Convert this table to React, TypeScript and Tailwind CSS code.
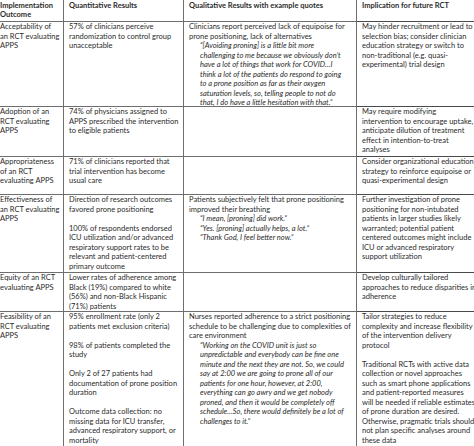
import React from 'react';

type Line = string | { q: string };

interface Row {
  height: string;
  cells: Line[][];
}

const rows: Row[] = [
  {
    height: 'h-[85px]',
    cells: [
      ['Acceptability of', 'an RCT evaluating', 'APPS'],
      ['57% of clinicians perceive', 'randomization to control group', 'unacceptable'],
      [
        'Clinicians report perceived lack of equipoise for',
        'prone positioning, lack of alternatives',
        { q: '“[Avoiding proning] is a little bit more' },
        { q: 'challenging to me because we obviously don’t' },
        { q: 'have a lot of things that work for COVID…I' },
        { q: 'think a lot of the patients do respond to going' },
        { q: 'to a prone position as far as their oxygen' },
        { q: 'saturation levels, so, telling people to not do' },
        { q: 'that, I do have a little hesitation with that.”' },
      ],
      [
        'May hinder recruitment or lead to',
        'selection bias; consider clinician',
        'education strategy or switch to',
        'non-traditional (e.g. quasi-',
        'experimental) trial design',
      ],
    ],
  },
  {
    height: 'h-[50px]',
    cells: [
      ['Adoption of an', 'RCT evaluating', 'APPS'],
      ['74% of physicians assigned to', 'APPS prescribed the intervention', 'to eligible patients'],
      [],
      [
        'May require modifying',
        'intervention to encourage uptake,',
        'anticipate dilution of treatment',
        'effect in intention-to-treat',
        'analyses',
      ],
    ],
  },
  {
    height: 'h-[38px]',
    cells: [
      ['Appropriateness', 'of an RCT', 'evaluating APPS'],
      ['71% of clinicians reported that', 'trial intervention has become', 'usual care'],
      [],
      [
        'Consider organizational education',
        'strategy to reinforce equipoise or',
        'quasi-experimental design',
      ],
    ],
  },
  {
    height: 'h-[78px]',
    cells: [
      ['Effectiveness of', 'an RCT evaluating', 'APPS'],
      [
        'Direction of research outcomes',
        'favored prone positioning',
        '',
        '100% of respondents endorsed',
        'ICU utilization and/or advanced',
        'respiratory support rates to be',
        'relevant and patient-centered',
        'primary outcome',
      ],
      [
        'Patients subjectively felt that prone positioning',
        'improved their breathing',
        { q: '“I mean, [proning] did work.”' },
        { q: '“Yes. [proning] actually helps, a lot.”' },
        { q: '“Thank God, I feel better now.”' },
      ],
      [
        'Further investigation of prone',
        'positioning for non-intubated',
        'patients in larger studies likely',
        'warranted; potential patient',
        'centered outcomes might include',
        'ICU or advanced respiratory',
        'support utilization',
      ],
    ],
  },
  {
    height: 'h-[39px]',
    cells: [
      ['Equity of an RCT', 'evaluating APPS'],
      [
        'Lower rates of adherence among',
        'Black (19%) compared to white',
        '(56%) and non-Black Hispanic',
        '(71%) patients',
      ],
      [],
      ['Develop culturally tailored', 'approaches to reduce disparities in', 'adherence'],
    ],
  },
  {
    height: 'h-[140px]',
    cells: [
      ['Feasibility of an', 'RCT evaluating', 'APPS'],
      [
        '95% enrollment rate (only 2',
        'patients met exclusion criteria)',
        '',
        '98% of patients completed the',
        'study',
        '',
        'Only 2 of 27 patients had',
        'documentation of prone position',
        'duration',
        '',
        'Outcome data collection: no',
        'missing data for ICU transfer,',
        'advanced respiratory support, or',
        'mortality',
      ],
      [
        'Nurses reported adherence to a strict positioning',
        'schedule to be challenging due to complexities of',
        'care environment',
        { q: '“Working on the COVID unit is just so' },
        { q: 'unpredictable and everybody can be fine one' },
        { q: 'minute and the next they are not. So, we could' },
        { q: 'say at 2:00 we are going to prone all of our' },
        { q: 'patients for one hour, however, at 2:00,' },
        { q: 'everything can go awry and we get nobody' },
        { q: 'proned, and then it would be completely off' },
        { q: 'schedule…So, there would definitely be a lot of' },
        { q: 'challenges to it.”' },
      ],
      [
        'Tailor strategies to reduce',
        'complexity and increase flexibility',
        'of the intervention delivery',
        'protocol',
        '',
        'Traditional RCTs with active data',
        'collection or novel approaches',
        'such as smart phone applications',
        'and patient-reported measures',
        'will be needed if reliable estimates',
        'of prone duration are desired.',
        'Otherwise, pragmatic trials should',
        'not plan specific analyses around',
        'these data',
      ],
    ],
  },
];

const padding = ['pl-[5px]', 'pl-[5px]', 'pl-[5px]', 'pl-[5px]'];

const Cell: React.FC<{ lines: Line[]; col: number; last: boolean }> = ({ lines, col, last }) => (
  <div
    className={`${padding[col]} overflow-hidden ${col < 3 ? 'border-r border-[#6e6e6e]' : ''} ${
      last ? '' : 'border-b border-[#4a4a4a]'
    }`}
  >
    {lines.map((line, i) =>
      typeof line === 'string' ? (
        <div key={i} className="whitespace-nowrap">
          {line === '' ? '\u00a0' : line}
        </div>
      ) : (
        <div key={i} className="whitespace-nowrap pl-[11px] italic">
          {line.q}
        </div>
      )
    )}
  </div>
);

export default function App() {
  const headers = ['Implementation\nOutcome', 'Quantitative Results', 'Qualitative Results with example quotes', 'Implication for future RCT'];

  return (
    <div className="w-[474px] h-[446px] overflow-hidden bg-white">
      <div
        className="-ml-[5px] w-[490px] text-[7.5px] leading-[9.5px] text-[#2b2b2b]"
        style={{ fontFamily: 'Lato, "Open Sans", sans-serif' }}
      >
        <div className="grid grid-cols-[69px_120px_173px_128px] h-[22px]">
          {headers.map((h, i) => (
            <div
              key={h}
              className={`${padding[i]} pt-[1px] font-bold leading-[9px] whitespace-pre border-b border-[#4a4a4a] ${
                i < 3 ? 'border-r border-[#6e6e6e]' : ''
              }`}
            >
              {h}
            </div>
          ))}
        </div>
        {rows.map((row, r) => (
          <div key={r} className={`grid grid-cols-[69px_120px_173px_128px] ${row.height}`}>
            {row.cells.map((lines, c) => (
              <Cell key={c} lines={lines} col={c} last={r === rows.length - 1} />
            ))}
          </div>
        ))}
      </div>
    </div>
  );
}
